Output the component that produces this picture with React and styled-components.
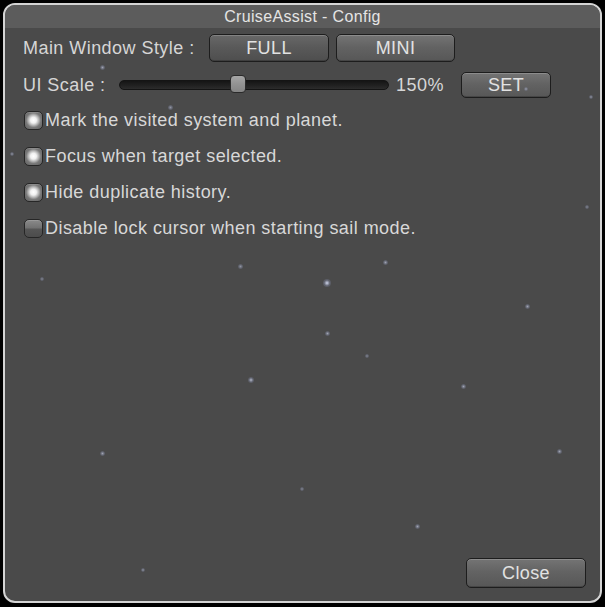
import React from 'react';
import styled, { createGlobalStyle } from 'styled-components';

const GlobalStyle = createGlobalStyle`
    html, body {
        margin: 0;
        padding: 0;
        background: #000;
    }
    body {
        font-family: "Liberation Sans", Arial, sans-serif;
    }
`;

const Page = styled.div`
    width: 605px;
    height: 607px;
    padding: 3px;
    box-sizing: border-box;
    background: #000;
`;

const Window = styled.div`
    position: relative;
    width: 599px;
    height: 600px;
    box-sizing: border-box;
    border: 2px solid #d4d4d4;
    border-radius: 12px;
    background: #4a4a4a;
    overflow: hidden;
    display: flex;
    flex-direction: column;
`;

const Star = styled.span`
    position: absolute;
    width: ${p => p.size}px;
    height: ${p => p.size}px;
    border-radius: 50%;
    background: radial-gradient(circle, rgba(215, 222, 245, ${p => p.alpha}) 0%, rgba(150, 160, 200, 0.3) 50%, rgba(74, 74, 74, 0) 100%);
    pointer-events: none;
`;

const TitleBar = styled.div`
    height: 23px;
    background: #5c5c5c;
    display: flex;
    align-items: center;
    justify-content: center;
    color: #e4e4e4;
    font-size: 16px;
    letter-spacing: 0.35px;
    flex-shrink: 0;
`;

const Content = styled.div`
    flex: 1;
    display: flex;
    flex-direction: column;
    padding: 6px 14px 13px 18px;
    position: relative;
`;

const Row = styled.div`
    display: flex;
    align-items: center;
    height: ${p => p.h}px;
    margin-top: ${p => p.mt || 0}px;
`;

const Label = styled.div`
    width: ${p => p.w}px;
    flex-shrink: 0;
    color: #d6d6d6;
    font-size: 18px;
    letter-spacing: 0.45px;
    white-space: nowrap;
`;

const Button = styled.button`
    width: ${p => p.w}px;
    height: ${p => p.h}px;
    margin-left: ${p => p.ml || 0}px;
    flex-shrink: 0;
    padding: 0;
    border: 1px solid #1d1d1d;
    border-radius: 5px;
    background: ${p => p.active
        ? 'linear-gradient(to bottom, #686868 0%, #5a5a5a 45%, #4e4e4e 100%)'
        : 'linear-gradient(to bottom, #747474 0%, #636363 45%, #575757 100%)'};
    box-shadow: inset 0 1px 0 rgba(255, 255, 255, 0.18), inset 0 -1px 0 rgba(0, 0, 0, 0.2);
    color: #e2e2e2;
    font-family: "Liberation Sans", Arial, sans-serif;
    font-size: 18px;
    letter-spacing: 0.4px;
    cursor: pointer;
`;

const Track = styled.div`
    position: relative;
    width: 270px;
    height: 10px;
    box-sizing: border-box;
    border: 1px solid #141414;
    border-radius: 5px;
    background: linear-gradient(to bottom, #151515 0%, #222222 60%, #2c2c2c 100%);
    flex-shrink: 0;
`;

const Thumb = styled.div`
    position: absolute;
    top: -6px;
    width: 16px;
    height: 18px;
    box-sizing: border-box;
    margin-left: -8px;
    border: 1px solid #2a2a2a;
    border-radius: 4px;
    background: linear-gradient(to bottom, #a6a6a6 0%, #939393 50%, #858585 100%);
`;

const Percent = styled.div`
    width: 65px;
    margin-left: 7px;
    color: #d6d6d6;
    font-size: 18px;
    letter-spacing: 0.45px;
    flex-shrink: 0;
`;

const ToggleList = styled.div`
    display: flex;
    flex-direction: column;
    gap: 12px;
    margin-top: 10px;
`;

const ToggleRow = styled.label`
    display: flex;
    align-items: center;
    height: 24px;
    gap: 2px;
    color: #d8d8d8;
    font-size: 18px;
    letter-spacing: 0.45px;
    white-space: nowrap;
`;

const Check = styled.span`
    width: 19px;
    height: 19px;
    margin-left: 1px;
    box-sizing: border-box;
    border: 1px solid #262626;
    border-radius: 5px;
    flex-shrink: 0;
    background: ${p => p.checked
        ? 'radial-gradient(circle at 50% 48%, #ffffff 0%, #f0f0f0 24%, #b8b8b8 42%, #7a7a7a 60%, #5c5c5c 100%)'
        : 'linear-gradient(to bottom, #8a8a8a 0%, #727272 45%, #555555 55%, #4c4c4c 100%)'};
    box-shadow: inset 0 1px 0 rgba(255, 255, 255, 0.15);
`;

const Footer = styled.div`
    margin-top: auto;
    display: flex;
    justify-content: flex-end;
`;

const stars = [
    { x: 95, y: 37, s: 5, a: 0.6 },
    { x: 163, y: 77, s: 5, a: 0.5 },
    { x: 5, y: 124, s: 4, a: 0.5 },
    { x: 519, y: 59, s: 4, a: 0.5 },
    { x: 584, y: 67, s: 4, a: 0.5 },
    { x: 233, y: 236, s: 5, a: 0.5 },
    { x: 318, y: 251, s: 8, a: 0.95 },
    { x: 320, y: 303, s: 5, a: 0.6 },
    { x: 360, y: 326, s: 4, a: 0.4 },
    { x: 243, y: 349, s: 6, a: 0.75 },
    { x: 378, y: 232, s: 5, a: 0.6 },
    { x: 520, y: 276, s: 5, a: 0.6 },
    { x: 456, y: 356, s: 5, a: 0.6 },
    { x: 552, y: 421, s: 5, a: 0.6 },
    { x: 95, y: 423, s: 5, a: 0.6 },
    { x: 410, y: 496, s: 5, a: 0.6 },
    { x: 136, y: 540, s: 4, a: 0.5 },
    { x: 580, y: 177, s: 4, a: 0.4 },
    { x: 35, y: 249, s: 4, a: 0.4 },
    { x: 295, y: 459, s: 4, a: 0.4 },
];

const toggles = [
    { label: 'Mark the visited system and planet.', checked: true },
    { label: 'Focus when target selected.', checked: true },
    { label: 'Hide duplicate history.', checked: true },
    { label: 'Disable lock cursor when starting sail mode.', checked: false },
];

const scale = 150;
const scaleMin = 50;
const scaleMax = 277;

const App = () => {
    const pos = (scale - scaleMin) / (scaleMax - scaleMin) * 100;
    return (
        <Page>
            <GlobalStyle />
            <Window>
                <TitleBar>CruiseAssist - Config</TitleBar>
                <Content>
                    {stars.map((st, i) => (
                        <Star key={i} size={st.s} alpha={st.a} style={{ left: st.x, top: st.y }} />
                    ))}
                    <Row h={28}>
                        <Label w={186}>Main Window Style :</Label>
                        <Button w={120} h={28} active>FULL</Button>
                        <Button w={119} h={28} ml={7}>MINI</Button>
                    </Row>
                    <Row h={26} mt={10}>
                        <Label w={96}>UI Scale :</Label>
                        <Track>
                            <Thumb style={{ left: `${pos}%` }} />
                        </Track>
                        <Percent>{scale}%</Percent>
                        <Button w={90} h={26}>SET</Button>
                    </Row>
                    <ToggleList>
                        {toggles.map(t => (
                            <ToggleRow key={t.label}>
                                <Check checked={t.checked} />
                                {t.label}
                            </ToggleRow>
                        ))}
                    </ToggleList>
                    <Footer>
                        <Button w={120} h={30}>Close</Button>
                    </Footer>
                </Content>
            </Window>
        </Page>
    );
};

export default App;
